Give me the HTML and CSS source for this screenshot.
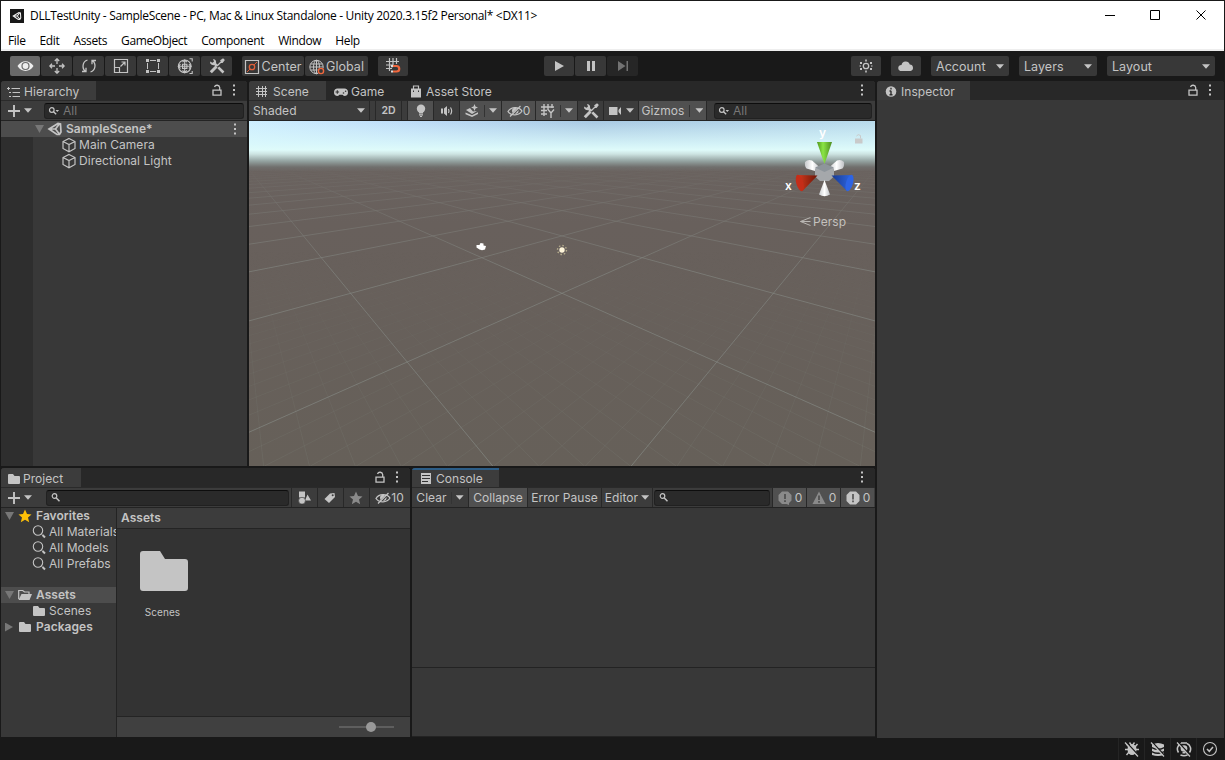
FILE: index.html
```html
<!DOCTYPE html>
<html lang="en">
<head>
    <meta charset="UTF-8">
    <title>DLLTestUnity - SampleScene</title>
    <link rel="stylesheet" href="styles.css">
</head>
<body>
<!-- icon sprite -->
<svg class="sprite">
    <symbol id="unity" viewBox="0 0 16 16"><path d="M2 8 11 2.5 13.5 3 14 11 12.5 13.5 10 13.5zM2 8H8.5M8.5 8 12.5 2.8M8.5 8 12.5 13.2" fill="none" stroke="currentColor" stroke-width="1.7"/></symbol>
    <symbol id="eye" viewBox="0 0 16 16"><path d="M0 8C4 1.5 12 1.5 16 8 12 14.5 4 14.5 0 8z" fill="currentColor"/><circle cx="8" cy="8" r="4.1" fill="#6a6a6a"/><circle cx="8" cy="8" r="2.9" fill="currentColor"/></symbol>
    <symbol id="move" viewBox="0 0 16 16"><path d="M8 1v5M8 10v5M1 8h5M10 8h5M5.8 3 8 .8 10.2 3M5.800 13 8 15.2 10.2 13M3 5.8.8 8 3 10.2M13 5.8 15.2 8 13 10.2" fill="none" stroke="currentColor" stroke-width="1.3"/></symbol>
    <symbol id="rotate" viewBox="0 0 16 16"><path d="M6.5 2C1.5 3.5.5 10 4.5 13.5M9.5 14C14.5 12.5 15.5 6 11.5 2.5M1 13.5H5V9.8M15 2.5H11V6.2" fill="none" stroke="currentColor" stroke-width="1.3"/></symbol>
    <symbol id="scale" viewBox="0 0 16 16"><path d="M1.5 1.5h13v13h-13zM1.5 9.5h5v5M7.5 8.5 12 4M8.5 4H12v3.5" fill="none" stroke="currentColor" stroke-width="1.2"/></symbol>
    <symbol id="rect" viewBox="0 0 16 16"><path d="M2.5 5v6M13.5 5v6M5 2.5h6M5 13.5h6" stroke="currentColor"/><path d="M1 1h3v3H1zM12 1h3v3h-3zM1 12h3v3H1zM12 12h3v3h-3z" fill="currentColor"/></symbol>
    <symbol id="transform" viewBox="0 0 16 16"><g fill="none" stroke="currentColor" stroke-width="1.1"><circle cx="7.7" cy="8.3" r="6.3"/><path d="M7.7 1.5v13M1.2 8.3h13M5.5 4.200l2.2-2.200 2.2 2.2M5.5 12.4l2.2 2.2 2.2-2.2M3.5 6.1l-2.2 2.2 2.2 2.2M11.9 6.1l2.2 2.2-2.2 2.2M12.5 .8h2.700v2.700M12.5 15.5h2.700V13M5.500 6.200v4.200h4.400V6.200z"/></g></symbol>
    <symbol id="tools" viewBox="0 0 16 16"><path d="M1.800 14.200 7.500 8.500" stroke="currentColor" stroke-width="3"/><path d="M8 8 13 3M12 2.500l2-1.500 1 1-1.500 2z" fill="currentColor" stroke="currentColor" stroke-width="1.300"/><path d="M5 5l3 3M9.300 9.300 14.500 14.500" stroke="currentColor" stroke-width="2.600"/><path d="M1 3.500A3.200 3.200 0 0 0 6.300 6.300 3.200 3.200 0 0 0 4 .9L5 3.400 3.500 4.800z" fill="currentColor"/></symbol>
    <symbol id="pivot" viewBox="0 0 16 16"><path d="M1.5 1.5h13v13h-13z" fill="none" stroke="currentColor" stroke-width="1.2"/><path d="M3 13 6 10M10 6 13 3" stroke="#d85c38"/><circle cx="8" cy="8" r="2.7" fill="none" stroke="#e0603a" stroke-width="1.3"/></symbol>
    <symbol id="globe" viewBox="0 0 16 16"><g fill="none" stroke="currentColor"><circle cx="7.5" cy="8" r="6.7"/><ellipse cx="7.5" cy="8" rx="3" ry="6.7"/><path d="M7.5 1v14M1.5 5h12M1 8h13M1.5 11h12"/></g><circle cx="12" cy="12" r="3.6" fill="#383838"/><circle cx="12" cy="12" r="2.6" fill="none" stroke="#f0683e" stroke-width="1.4"/></symbol>
    <symbol id="snap" viewBox="0 0 16 16"><path d="M4.5 0v13M8 0v7M11.5 0v6M1 3.5h13M1 7h7M1 10.5h6" stroke="currentColor" stroke-width="1.2"/><path d="M8 8h3.500a2.700 2.700 0 0 1 0 5.500H8" fill="none" stroke="#f0683e" stroke-width="2.2"/><path d="M6 7h2v2.200H6zM6 12.4h2v2.200H6z" fill="#ddd"/></symbol>
    <symbol id="list" viewBox="0 0 16 16"><path d="M5.500 4.500H14M6.500 8.500H14M6.500 12.500H14M1 4.500h3M3 8.500h2M3 12.500h2M2.500 3v3" stroke="currentColor"/></symbol>
    <symbol id="hash" viewBox="0 0 16 16"><path d="M4.500 2v11M8.5 2v11M11.500 2v11M2 4.500h11M2 7.500h11M2 10.500h11" stroke="currentColor" stroke-width="1"/></symbol>
    <symbol id="pad" viewBox="0 0 16 16"><path d="M4.5 4.5h7A3.8 3.8 0 0 1 12 12Q10.5 12 9.5 10.7h-3Q5.5 12 4 12a3.8 3.8 0 0 1 .5-7.5z" fill="currentColor"/><path d="M2.5 8h3.6M4.3 6.2v3.6" stroke="#333" stroke-width="1.1"/><circle cx="10.5" cy="9" r=".8" fill="#333"/><circle cx="12.6" cy="7.2" r=".8" fill="#333"/></symbol>
    <symbol id="bag" viewBox="0 0 16 16"><path d="M3 4.500h10v9H3z" fill="currentColor"/><path d="M5.5 5V2h5V5" fill="none" stroke="currentColor" stroke-width="1.2"/><path d="M5.5 6.500v1.500M10.5 6.500v1.500" stroke="#333"/></symbol>
    <symbol id="info" viewBox="0 0 16 16"><circle cx="8" cy="7.500" r="5.300" fill="currentColor"/><path d="M8 3.800v1.800M8 6.700v4.200M6.5 7H8M6.5 10.700h3" stroke="#303030" stroke-width="1.4"/></symbol>
    <symbol id="lock" viewBox="0 0 16 16"><path d="M4 8.2h8v5H4zM10.7 8V5.5A2.7 2.7 0 0 0 5.5 5" fill="none" stroke="currentColor" stroke-width="1.3"/></symbol>
    <symbol id="dots" viewBox="0 0 16 16"><path d="M7 2.500h2v2H7zM7 7h2v2H7zM7 11.5h2v2H7z" fill="currentColor"/></symbol>
    <symbol id="plus" viewBox="0 0 16 16"><path d="M2 8h12M8 2v12" stroke="currentColor" stroke-width="1.9"/></symbol>
    <symbol id="find" viewBox="0 0 16 16"><circle cx="5.500" cy="6" r="2.300" fill="none" stroke="currentColor" stroke-width="1.2"/><path d="M7.300 8l3.200 3.200" stroke="currentColor" stroke-width="1.500"/></symbol>
    <symbol id="find2" viewBox="0 0 16 16"><circle cx="4.800" cy="7" r="2.300" fill="none" stroke="currentColor" stroke-width="1.2"/><path d="M6.500 8.800l2.700 2.500" stroke="currentColor" stroke-width="1.4"/><path d="M8.500 7h3.600l-1.800 2z" fill="currentColor"/></symbol>
    <symbol id="lens" viewBox="0 0 16 16"><circle cx="7" cy="6.5" r="4.700" fill="none" stroke="currentColor" stroke-width="1.1"/><path d="M10.3 10 11.5 11" stroke="currentColor"/><path d="M11.5 11l2.500 2.500" stroke="currentColor" stroke-width="2"/></symbol>
    <symbol id="cube" viewBox="0 0 16 16"><path d="M8 1.500 14 4.500v7L8 14.700 2 11.500v-7zM2 4.500l6 3 6-3M8 7.500v7" fill="none" stroke="currentColor" stroke-width="1.2"/></symbol>
    <symbol id="bulb" viewBox="0 0 16 16"><circle cx="8" cy="5.800" r="4.200" fill="currentColor"/><path d="M6 9h4v1.500H6zM6 11.300h4v1.200H6zM7 13h2v1H7z" fill="currentColor"/></symbol>
    <symbol id="audio" viewBox="0 0 16 16"><path d="M2 5.500h2v5H2zM5 5.500 8 3v10L5 10.500z" fill="currentColor"/><path d="M9.500 6q1 2 0 4M11.500 4.500q2.300 3.500 0 7" fill="none" stroke="currentColor" stroke-width="1.2"/></symbol>
    <symbol id="fx" viewBox="0 0 16 16"><path d="M2 7l4-2L9 8.500l4-.5-5 3zM1.500 9.500 8 12.300l6-3v1.700L8 14 1.500 11.200zM10.500 1l1 2.500L14 4.500l-2.500 1-1 2.500-1-2.500L7 4.500l2.500-1z" fill="currentColor"/></symbol>
    <symbol id="hidden" viewBox="0 0 16 16"><path d="M1 8.500C4 3.500 12 3.500 15 8 12 13 4 13 1 8.500zM3 13.500 13.500 3" fill="none" stroke="currentColor" stroke-width="1.3"/><path d="M5 8a3 3 0 0 1 5-2.500L5.500 10zM8 11l3.500-4q.5 4-3.500 4z" fill="currentColor"/></symbol>
    <symbol id="gridy" viewBox="0 0 16 16"><path d="M4 1v12M8 1v6M12 1v4M1 4h13M1 7.500h6M1 11h6M8 6.500l3 3.500 3-3.500M11 10v5" fill="none" stroke="currentColor" stroke-width="1.4"/></symbol>
    <symbol id="cam" viewBox="0 0 16 16"><path d="M1 4h8.500v8H1zM10.500 7 13 4v8l-2.500-3z" fill="currentColor"/></symbol>
    <symbol id="folder" viewBox="0 0 16 16"><path d="M2 4q0-1 1-1h4l1.500 2H13q1 0 1 1v6q0 1-1 1H3q-1 0-1-1z" fill="currentColor"/></symbol>
    <symbol id="open" viewBox="0 0 16 16"><path d="M1.700 12V3.500h4L7.500 5H12v2" fill="none" stroke="currentColor" stroke-width="1.2"/><path d="M1.500 13 4.500 7H15l-2.500 6z" fill="currentColor"/></symbol>
    <symbol id="star" viewBox="0 0 16 16"><path d="M8 1.500l2 4.500 4.500.4L11 9.500l1.200 4.700L8 11.700l-4.200 2.500L5 9.500 1.500 6.400 6 6z" fill="currentColor"/></symbol>
    <symbol id="shapes" viewBox="0 0 16 16"><path d="M3 1.500h6v6H3zM11.500 4.500 15 10.500H9z" fill="currentColor"/><circle cx="6" cy="10.700" r="3.400" fill="currentColor" stroke="#3c3c3c" stroke-width=".6"/></symbol>
    <symbol id="tag" viewBox="0 0 16 16"><path d="M2.500 9 8 3.500l4.500-.5.500 4L7 13z" fill="currentColor"/><circle cx="10.700" cy="5.200" r="1" fill="#3c3c3c"/></symbol>
    <symbol id="page" viewBox="0 0 16 16"><path d="M3 2h10v11H3z" fill="currentColor"/><path d="M4 4.500h8M4 7.500h8M4 10.500h6" stroke="#333"/></symbol>
    <symbol id="err" viewBox="0 0 16 16"><path d="M5 1.500h6L14.500 5v5.500L12 13v2L9.500 14H5L1.500 10.500V5z" fill="currentColor"/><path d="M8 4v5M8 10.300v1.800" stroke="#444" stroke-width="1.5"/></symbol>
    <symbol id="warn" viewBox="0 0 16 16"><path d="M8 1.500 14.500 14h-13z" fill="currentColor"/><path d="M8 5.500v4.500M8 11v1.700" stroke="#444" stroke-width="1.5"/></symbol>
    <symbol id="msg" viewBox="0 0 16 16"><path d="M5 1.500h6L14.500 5v6L11 14.500H5L1.500 11V5z" fill="currentColor"/><path d="M8 4v5.500M8 10.500v1.800" stroke="#444" stroke-width="1.5"/></symbol>
    <symbol id="sun" viewBox="0 0 16 16"><circle cx="8" cy="8" r="2.700" fill="none" stroke="currentColor" stroke-width="1.3"/><g fill="currentColor"><path d="M7.200 1.500h1.600v2H7.200zM7.200 12.500h1.600v2H7.200zM2 4h2v2H2zM12 4h2v2h-2zM2 10h2v2H2zM12 10h2v2h-2zM1.500 7.500H3v1H1.500zM13 7.500h1.500v1H13z"/></g></symbol>
    <symbol id="cloud" viewBox="0 0 16 16"><path d="M4 13a3.500 3 0 0 1-.5-6A4.300 4.300 0 0 1 11.800 6.500 3.300 3.300 0 0 1 12.500 13z" fill="currentColor"/></symbol>
    <symbol id="bug" viewBox="0 0 16 16"><ellipse cx="8" cy="8.500" rx="4.500" ry="5.500" fill="currentColor"/><path d="M1 8.500h14M2.500 3 5 6M13.500 3 11 6M2.500 14 5 11M13.500 14 11 11M5.500 1.500 8 5l2.500-3.500" fill="none" stroke="currentColor" stroke-width="1.4"/><path d="M2 1 15 15" stroke="#191919" stroke-width="1.600"/><path d="M1 1.500 14 15.500" stroke="currentColor" stroke-width="1.2"/></symbol>
    <symbol id="db" viewBox="0 0 16 16"><path d="M2 3.500q6-3 12 0v2.500q-6 3-12 0zM2 7.500q6 3 12 0v2.500q-6 3-12 0zM2 11.500q6 3 12 0V14q-6 2-12 0z" fill="currentColor"/><path d="M2 1 15 15" stroke="#191919" stroke-width="1.600"/><path d="M1 1.500 14 15.500" stroke="currentColor" stroke-width="1.2"/></symbol>
    <symbol id="gi" viewBox="0 0 16 16"><path d="M5 2.500a6 6 0 0 0-2.500 9M11 2.500a6 6 0 0 1 2.500 9M4.500 14q3.500 1.500 7 0M5 2h6" fill="none" stroke="currentColor" stroke-width="1.6"/><circle cx="8" cy="7.500" r="3.300" fill="currentColor"/><path d="M6.500 11h3v1.500h-3z" fill="currentColor"/><path d="M2 1 15 15" stroke="#191919" stroke-width="1.600"/><path d="M1 1.500 14 15.500" stroke="currentColor" stroke-width="1.2"/></symbol>
    <symbol id="ok" viewBox="0 0 16 16"><circle cx="8" cy="8" r="6.500" fill="none" stroke="currentColor" stroke-width="1.1"/><path d="M5 8l2.300 2.300L11 6" fill="none" stroke="currentColor" stroke-width="1.5"/></symbol>
</svg>

<div class="window">
    <header class="titlebar">
        <span class="logo"><svg><use href="#unity"/></svg></span>
        <span class="title">DLLTestUnity - SampleScene - PC, Mac &amp; Linux Standalone - Unity 2020.3.15f2 Personal* &lt;DX11&gt;</span>
        <svg class="controls" viewBox="0 0 102 11"><path d="M0 5.500h10M45.500.5h9v9h-9zM91.500.5l9 9M100.500.5l-9 9" fill="none" stroke="#000"/></svg>
    </header>
    <nav class="menu">
        <span>File</span><span>Edit</span><span>Assets</span><span>GameObject</span><span>Component</span><span>Window</span><span>Help</span>
    </nav>

    <div class="toolbar">
        <div class="group tools">
            <b class="on"><svg class="i18"><use href="#eye"/></svg></b><b><svg><use href="#move"/></svg></b><b><svg><use href="#rotate"/></svg></b><b><svg><use href="#scale"/></svg></b><b><svg><use href="#rect"/></svg></b><b><svg><use href="#transform"/></svg></b><b><svg><use href="#tools"/></svg></b>
        </div>
        <div class="group pivots">
            <b><svg><use href="#pivot"/></svg>Center</b><b><svg><use href="#globe"/></svg>Global</b>
        </div>
        <div class="group"><b><svg><use href="#snap"/></svg></b></div>
        <div class="group play">
            <b><svg viewBox="0 0 16 16"><path d="M4 3l9 5-9 5z" fill="currentColor"/></svg></b><b><svg viewBox="0 0 16 16"><path d="M4 3h3v10H4zM9 3h3v10H9z" fill="currentColor"/></svg></b><b class="off"><svg viewBox="0 0 16 16"><path d="M3 3l7.500 5L3 13zM11.500 3H13v10h-1.500z" fill="currentColor"/></svg></b>
        </div>
        <div class="group right">
            <b><svg><use href="#sun"/></svg></b><b><svg><use href="#cloud"/></svg></b>
            <b class="drop">Account<i class="arrow"></i></b><b class="drop">Layers<i class="arrow"></i></b><b class="drop wide">Layout<i class="arrow"></i></b>
        </div>
    </div>

    <main class="docks">
        <div class="left">
            <div class="top">
                <section class="panel hierarchy">
                    <div class="tabs"><span class="tab active"><svg><use href="#list"/></svg>Hierarchy</span><svg class="lock"><use href="#lock"/></svg><svg class="dots"><use href="#dots"/></svg></div>
                    <div class="bar"><svg class="plus"><use href="#plus"/></svg><i class="arrow"></i><span class="search"><svg><use href="#find2"/></svg>All</span></div>
                    <div class="tree">
                        <div class="row scene"><i class="arrow fold"></i><svg><use href="#unity"/></svg><span>SampleScene*</span><svg class="dots"><use href="#dots"/></svg></div>
                        <div class="row"><svg><use href="#cube"/></svg><span>Main Camera</span></div>
                        <div class="row"><svg><use href="#cube"/></svg><span>Directional Light</span></div>
                    </div>
                </section>

                <section class="panel sceneview">
                    <div class="tabs"><span class="tab active"><svg><use href="#hash"/></svg>Scene</span><span class="tab game"><svg><use href="#pad"/></svg>Game</span><span class="tab store"><svg><use href="#bag"/></svg>Asset Store</span><svg class="dots"><use href="#dots"/></svg></div>
                    <div class="bar cells">
                        <span class="cell shaded">Shaded<i class="arrow"></i></span>
                        <span class="cell w6"></span>
                        <span class="cell w26 twod">2D</span>
                        <span class="cell w6"></span>
                        <span class="cell w26 on"><svg><use href="#bulb"/></svg></span>
                        <span class="cell w26"><svg><use href="#audio"/></svg></span>
                        <span class="cell w42 on"><svg><use href="#fx"/></svg><i class="line"></i><i class="arrow"></i></span>
                        <span class="cell w34 on"><svg><use href="#hidden"/></svg>0</span>
                        <span class="cell w42 on"><svg><use href="#gridy"/></svg><i class="line"></i><i class="arrow"></i></span>
                        <span class="cell w26"><svg><use href="#tools"/></svg></span>
                        <span class="cell w35"><svg><use href="#cam"/></svg><i class="arrow"></i></span>
                        <span class="cell gizmos on">Gizmos<i class="line"></i><i class="arrow"></i></span>
                        <span class="cell last"><span class="search"><svg><use href="#find2"/></svg>All</span></span>
                    </div>
                    <svg class="viewport" viewBox="249 121 626 345">
                        <defs>
                            <linearGradient id="sky" x1="0" y1="0" x2="1" y2="0">
                                <stop offset="0" stop-color="#cdeeff"/><stop offset=".25" stop-color="#bedcf8"/><stop offset=".55" stop-color="#a9c9e3"/><stop offset="1" stop-color="#b8daec"/>
                            </linearGradient>
                            <linearGradient id="haze" x1="0" y1="121" x2="0" y2="171" gradientUnits="userSpaceOnUse">
                                <stop offset="0" stop-color="#ddf9fa" stop-opacity="0"/><stop offset=".45" stop-color="#dcfafb" stop-opacity=".8"/><stop offset=".58" stop-color="#dffbfa"/><stop offset=".66" stop-color="#cde4e2"/><stop offset=".8" stop-color="#94a3a1"/><stop offset=".92" stop-color="#706f6d"/><stop offset="1" stop-color="#6b6461"/>
                            </linearGradient>
                            <linearGradient id="ground" x1="0" y1="0" x2="0" y2="1"><stop offset="0" stop-color="#6c6562"/><stop offset=".3" stop-color="#68605c"/><stop offset="1" stop-color="#666059"/></linearGradient>
                            <linearGradient id="far" x1="0" y1="165" x2="0" y2="270" gradientUnits="userSpaceOnUse"><stop offset="0" stop-color="#000"/><stop offset=".3" stop-color="#666"/><stop offset="1" stop-color="#fff"/></linearGradient>
                            <linearGradient id="near" x1="0" y1="250" x2="0" y2="466" gradientUnits="userSpaceOnUse"><stop offset="0" stop-color="#000"/><stop offset=".5" stop-color="#888"/><stop offset="1" stop-color="#fff"/></linearGradient>
                            <mask id="farMask" maskUnits="userSpaceOnUse" x="249" y="121" width="626" height="345"><path d="M249 121h626v345H249z" fill="url(#far)"/></mask>
                            <mask id="nearMask" maskUnits="userSpaceOnUse" x="249" y="121" width="626" height="345"><path d="M249 121h626v345H249z" fill="url(#near)"/></mask>
                            <linearGradient id="red"><stop offset="0" stop-color="#d23a1d"/><stop offset="1" stop-color="#6d1507"/></linearGradient>
                            <linearGradient id="blue"><stop offset="0" stop-color="#173a92"/><stop offset="1" stop-color="#2f66e0"/></linearGradient>
                            <linearGradient id="green"><stop offset="0" stop-color="#4f961c"/><stop offset=".4" stop-color="#8be545"/><stop offset="1" stop-color="#4d8c20"/></linearGradient>
                            <linearGradient id="white"><stop offset="0" stop-color="#c8cacd"/><stop offset=".5" stop-color="#fff"/><stop offset="1" stop-color="#c0c2c6"/></linearGradient>
                        </defs>
                        <path d="M249 121h626v345H249z" fill="url(#ground)"/>
                        <path d="M249 121h626v50H249z" fill="url(#sky)"/>
                        <path d="M249 121h626v50H249z" fill="url(#haze)"/>
                        <g id="minor" class="minor" mask="url(#nearMask)"></g>
                        <g id="major" class="major" mask="url(#farMask)"></g>
                        <!-- camera and light gizmos -->
                        <path d="M476.500 247.500v-2.500h3l1-2 3 .5v2l2.500.5-1 3.500-3 .8-2.500-.8z" fill="#fff"/>
                        <circle cx="562" cy="250" r="4.500" fill="none" stroke="#b5ac8d" stroke-width="1.4" stroke-dasharray="1.500 2"/><circle cx="562" cy="250" r="2.700" fill="#fff5da"/>
                        <!-- orientation gizmo -->
                        <path d="M805 162q3-3 7-1.500l8 7-5 3.500-8.500-2.500q-2-2-1.500-6.500z" fill="url(#white)"/>
                        <path d="M844 162q-3-3-7-1.500l-8 7 5 3.500 8.500-2.500q2-2 1.500-6.500z" fill="url(#white)"/>
                        <path d="M815 168.500l9.500-4 9.500 4v8l-5 4.500h-9l-5-4.500z" fill="#a5a8ab"/><path d="M815 167.500l9.500-4 9.500 4-9.500 4.500z" fill="#8e959b"/>
                        <path d="M824.500 180l5.500 14.500q-5.500 3.500-11 0z" fill="url(#white)"/>
                        <path d="M817 142h15l-7.500 22z" fill="url(#green)"/>
                        <path d="M817.500 175.500 798 175l4.500 16z" fill="url(#red)"/><ellipse cx="799.800" cy="183" rx="3.500" ry="8.500" transform="rotate(-16 799.800 183)" fill="#c52d18"/>
                        <path d="M831.500 175.500 852 175l-5 16z" fill="url(#blue)"/><ellipse cx="849.500" cy="183" rx="3.500" ry="8.500" transform="rotate(16 849.500 183)" fill="#2d64e4"/>
                        <g class="axis"><text x="819" y="137">y</text><text x="785" y="190">x</text><text x="854" y="190">z</text></g>
                        <path d="M810.500 217.500 800.500 221.500 810.500 225.500M800.500 221.500h10" fill="none" stroke="#bab7b3"/>
                        <text class="persp" x="813" y="226">Persp</text>
                        <path d="M855 138.500h7.500v5H855z" fill="#c9caca"/><path d="M856.500 136q1.500-2.500 4-.5v3" fill="none" stroke="#c9caca"/>
                    </svg>
                </section>
            </div>

            <div class="bottom">
                <section class="panel project">
                    <div class="tabs"><span class="tab active"><svg><use href="#folder"/></svg>Project</span><svg class="lock"><use href="#lock"/></svg><svg class="dots"><use href="#dots"/></svg></div>
                    <div class="bar cells">
                        <svg class="plus"><use href="#plus"/></svg><i class="arrow"></i><span class="search"><svg><use href="#find"/></svg></span>
                        <span class="cell w26"><svg><use href="#shapes"/></svg></span><span class="cell w26"><svg><use href="#tag"/></svg></span><span class="cell w26 dim"><svg><use href="#star"/></svg></span><span class="cell w41"><svg><use href="#hidden"/></svg>10</span>
                    </div>
                    <div class="browser">
                        <div class="folders">
                            <div class="row strong"><i class="arrow fold"></i><svg class="gold"><use href="#star"/></svg><span>Favorites</span></div>
                            <div class="row sub"><svg><use href="#lens"/></svg><span>All Materials</span></div>
                            <div class="row sub"><svg><use href="#lens"/></svg><span>All Models</span></div>
                            <div class="row sub"><svg><use href="#lens"/></svg><span>All Prefabs</span></div>
                            <div class="row strong picked"><i class="arrow fold"></i><svg><use href="#open"/></svg><span>Assets</span></div>
                            <div class="row sub"><svg><use href="#folder"/></svg><span>Scenes</span></div>
                            <div class="row strong"><i class="arrow fold closed"></i><svg><use href="#folder"/></svg><span>Packages</span></div>
                        </div>
                        <div class="assets">
                            <div class="crumb">Assets</div>
                            <div class="files">
                                <div class="file"><svg viewBox="0 0 48 40"><path d="M0 3q0-3 3-3h17l5 8h20q3 0 3 3v26q0 3-3 3H3q-3 0-3-3z" fill="#c4c4c4"/></svg><span>Scenes</span></div>
                            </div>
                            <div class="zoom"><div class="track"><i class="knob"></i></div></div>
                        </div>
                    </div>
                </section>

                <section class="panel console">
                    <div class="tabs"><span class="tab active focus"><svg><use href="#page"/></svg>Console</span><svg class="dots"><use href="#dots"/></svg></div>
                    <div class="bar cells">
                        <span class="cell clear">Clear<i class="line"></i><i class="arrow"></i></span>
                        <span class="cell on collapse">Collapse</span><span class="cell errpause">Error Pause</span><span class="cell editor">Editor<i class="arrow"></i></span>
                        <span class="cell find"><span class="search"><svg><use href="#find"/></svg></span></span>
                        <span class="cell w34 on count"><svg class="grey"><use href="#err"/></svg>0</span><span class="cell w34 on count"><svg class="grey"><use href="#warn"/></svg>0</span><span class="cell w34 on count"><svg><use href="#msg"/></svg>0</span>
                    </div>
                    <div class="log"></div>
                    <div class="detail"></div>
                </section>
            </div>
        </div>

        <section class="panel inspector">
            <div class="tabs"><span class="tab active"><svg><use href="#info"/></svg>Inspector</span><svg class="lock"><use href="#lock"/></svg><svg class="dots"><use href="#dots"/></svg></div>
        </section>
    </main>

    <footer class="status">
        <span><svg><use href="#bug"/></svg></span><span><svg><use href="#db"/></svg></span><span><svg><use href="#gi"/></svg></span><span><svg><use href="#ok"/></svg></span>
    </footer>
</div>
<script src="grid.js"></script>
</body>
</html>
```
FILE: styles.css
```css
* {
    box-sizing: border-box;
}
body {
    margin: 0;
    width: 1225px;
    height: 760px;
    overflow: hidden;
    background: #191919;
    color: #c4c4c4;
    font: 12px/16px Inter, "Liberation Sans", sans-serif;
    letter-spacing: 0.05px;
}
svg {
    display: block;
    flex: none;
    width: 16px;
    height: 16px;
}
.sprite {
    display: none;
}
.window {
    height: 760px;
    padding: 1px 1px 0;
    background: #191919;
    display: flex;
    flex-direction: column;
}

/* title and menu */
.titlebar {
    height: 29px;
    background: #fff;
    color: #000;
    display: flex;
    align-items: center;
    padding-left: 9px;
    font: 12px/16px "Open Sans", sans-serif;
    letter-spacing: -0.33px;
}
.logo {
    width: 14px;
    height: 14px;
    background: #181818;
    color: #eee;
    display: grid;
    place-items: center;
    margin-right: 6px;
}
.logo svg {
    width: 10px;
    height: 10px;
}
.titlebar .controls {
    width: 102px;
    height: 11px;
    margin: 0 17px 0 auto;
}
.menu {
    height: 21px;
    background: #fff;
    border-bottom: 2px solid #eee;
    color: #000;
    display: flex;
    gap: 14px;
    padding: 3px 7px 0;
    font: 12px/16px "Open Sans", sans-serif;
    letter-spacing: -0.36px;
}

/* main toolbar */
.toolbar {
    height: 30px;
    display: flex;
    align-items: center;
    padding: 0 9px;
    gap: 10px;
}
.group {
    display: flex;
    gap: 1px;
}
.group b {
    font-weight: 400;
    width: 30px;
    height: 20px;
    background: #383838;
    border-radius: 2px;
    display: flex;
    align-items: center;
    justify-content: center;
}
.tools b {
    width: 31px;
}
.tools b:first-child {
    width: 30px;
}
.group .on {
    background: #6a6a6a;
    color: #eee;
}
.i18 {
    width: 17px;
}
.pivots b,
.right .drop {
    font-size: 12.5px;
    padding-top: 1px;
}
.pivots b {
    width: 62px;
    gap: 1px;
}
.pivots b + b {
    width: 63px;
}
.play {
    margin-left: 126px;
}
.play b + b {
    width: 31px;
}
.group .off {
    background: #262626;
    color: #727272;
}
.right {
    margin-left: auto;
    gap: 10px;
}
.right .drop {
    width: 78px;
    padding-left: 5px;
    padding-right: 5px;
    justify-content: space-between;
}
.right .wide {
    width: 108px;
}
.arrow {
    flex: none;
    width: 8px;
    height: 4.5px;
    background: currentColor;
    clip-path: polygon(0 0, 100% 0, 50% 100%);
}

/* docked panels */
.docks {
    height: 657px;
    display: flex;
    gap: 2px;
}
.left {
    width: 874px;
    display: flex;
    flex-direction: column;
    gap: 2px;
}
.top {
    height: 385px;
    display: flex;
    gap: 2px;
}
.bottom {
    height: 269px;
    display: flex;
    gap: 2px;
}
.panel {
    background: #383838;
    border-radius: 3px 3px 0 0;
    overflow: hidden;
    display: flex;
    flex-direction: column;
}
.hierarchy {
    width: 246px;
}
.sceneview {
    width: 626px;
}
.project {
    width: 409px;
}
.console {
    width: 463px;
}
.inspector {
    width: 347px;
}
.tabs {
    height: 19px;
    background: #282828;
    display: flex;
    align-items: center;
}
.tab {
    height: 19px;
    display: flex;
    align-items: center;
    padding: 2px 9px 0 5px;
    gap: 2px;
}
.tab.active {
    background: #3c3c3c;
}
.hierarchy .tab {
    width: 95px;
}
.sceneview .tab:first-child {
    width: 77px;
    gap: 3px;
}
.sceneview .game {
    width: 81px;
    padding: 2px 0 0 7px;
}
.sceneview .store {
    padding: 2px 0 0 1px;
    gap: 2px;
}
.project .tab {
    width: 80px;
    gap: 1px;
}
.inspector .tab {
    width: 93px;
    padding-left: 6px;
}
.console .tab {
    width: 87px;
    padding-left: 6px;
}
.tab.focus {
    border-top: 2px solid #2c5d87;
    padding-top: 1px;
}
.lock {
    margin: 0 0 2px auto;
}
.tabs .dots {
    margin: 0 5px 1px auto;
}
.tabs .lock + .dots {
    margin-left: 1px;
}
.inspector .tabs .dots {
    margin-right: 6px;
}
.bar {
    height: 21px;
    background: #3c3c3c;
    border-top: 1px solid #2a2a2a;
    border-bottom: 1px solid #232323;
    display: flex;
    align-items: center;
}
.plus {
    margin: 0 2px 0 5px;
}
.search {
    height: 16px;
    border: 1px solid #212121;
    border-top-color: #0d0d0d;
    border-radius: 3px;
    background: #2a2a2a;
    color: #777;
    display: flex;
    align-items: center;
    flex: 1;
    margin: 0 3px 0 12px;
    padding-left: 2px;
}
.search svg {
    color: #c4c4c4;
}
.cell {
    height: 19px;
    border-left: 1px solid #282828;
    display: flex;
    align-items: center;
    justify-content: center;
    flex: none;
}
.cell.on {
    background: #505050;
}
.line {
    width: 1px;
    height: 12px;
    background: #333;
}
.w6 { width: 6px; }
.w26 { width: 26px; }
.w34 { width: 34px; }
.w35 { width: 35px; gap: 2px; }
.w41 { width: 41px; }
.w42 { width: 42px; gap: 4px; }
.shaded {
    width: 120px;
    border: 0;
    justify-content: space-between;
    padding: 0 4px;
}
.twod {
    font-size: 10.5px;
    font-weight: 600;
}
.gizmos {
    width: 68px;
    gap: 5px;
}
.cell.last {
    flex: 1;
}
.last .search {
    margin-left: 7px;
}
.row {
    height: 16px;
    display: flex;
    align-items: center;
    white-space: nowrap;
}
.tree {
    flex: 1;
    background: linear-gradient(90deg, #2e2e2e 32px, #383838 32px);
}
.tree .row {
    padding-left: 60px;
    gap: 2px;
}
.tree .scene {
    background: #4d4d4d;
    padding-left: 34px;
    font-weight: 600;
    gap: 3px;
}
.scene .dots {
    margin: 0 4px 0 auto;
}
.fold {
    width: 9px;
    height: 8px;
    color: #777;
}
.viewport {
    width: 626px;
    height: 345px;
}
.major {
    stroke: #858783;
    stroke-width: 1;
    stroke-opacity: 0.62;
}
.minor {
    stroke: #7b8079;
    stroke-width: 1;
    stroke-opacity: 0.26;
}
.axis {
    fill: #fff;
    font-size: 12px;
    font-weight: 600;
}
.persp {
    fill: #c4c1be;
    font-size: 12px;
}

/* project browser */
.project .search {
    margin: 0 2px 0 14px;
}
.project .cell {
    padding-right: 2px;
}
.project .w41 {
    padding-right: 1px;
}
.dim {
    color: #8a8a8a;
}
.browser {
    flex: 1;
    display: flex;
}
.folders {
    width: 116px;
    border-right: 1px solid #232323;
    overflow: hidden;
}
.folders .row {
    padding-left: 4px;
    gap: 3px;
}
.folders .sub {
    padding-left: 30px;
    gap: 2px;
}
.folders .strong {
    font-weight: 600;
}
.folders .picked {
    margin-top: 15px;
    background: #4d4d4d;
}
.folders .closed {
    width: 8px;
    height: 9px;
    clip-path: polygon(0 0, 100% 50%, 0 100%);
    margin-right: 1px;
}
.gold {
    color: #ffc107;
}
.assets {
    flex: 1;
    display: flex;
    flex-direction: column;
    background: #333;
}
.crumb {
    height: 21px;
    background: #3c3c3c;
    border-bottom: 1px solid #242424;
    padding: 2px 4px;
    font-weight: 600;
}
.files {
    flex: 1;
    padding: 22px 0 0 23px;
}
.file {
    width: 48px;
    font-size: 10px;
    display: flex;
    flex-direction: column;
    gap: 13px;
    align-items: center;
}
.file span {
    padding-right: 3px;
}
.file svg {
    width: 48px;
    height: 40px;
}
.zoom {
    height: 21px;
    background: #404040;
    border-top: 1px solid #242424;
    display: flex;
    align-items: center;
    justify-content: flex-end;
    padding-right: 16px;
}
.track {
    width: 55px;
    height: 2px;
    background: #5e5e5e;
    display: flex;
    align-items: center;
    padding-left: 27px;
}
.knob {
    width: 10px;
    height: 10px;
    border-radius: 5px;
    background: #999;
    flex: none;
}

/* console */
.clear {
    width: 56px;
    border: 0;
    gap: 4px;
}
.collapse {
    width: 59px;
}
.errpause {
    width: 74px;
    white-space: nowrap;
}
.editor {
    width: 51px;
    gap: 3px;
}
.console .find {
    width: 120px;
}
.find .search {
    margin: 0 2px 0 1px;
}
.count {
    gap: 2px;
}
.grey {
    color: #8a8a8a;
}
.log {
    flex: 1;
}
.detail {
    height: 70px;
    border-top: 1px solid #232323;
    border-bottom: 1px solid #232323;
}

.status {
    height: 22px;
    display: flex;
    justify-content: flex-end;
    padding-right: 2px;
}
.status span {
    width: 26px;
    border-left: 1px solid #252525;
    display: grid;
    place-items: center;
}
```
FILE: grid.js
```js
// ground plane seen from a camera turned 45 degrees
const HORIZON = 145.5;
const BOTTOM = 466;

function addLines(id, from, to, step, top) {
    let out = '';
    for (let i = from; i <= to; i++) {
        const c = i * step;
        const slope = 333 * (2 * c + 3.151) / 465.7;
        const dx1 = slope * (top - HORIZON);
        const dx2 = slope * (BOTTOM - HORIZON);
        out += `<line x1="${229 + dx1}" y1="${top}" x2="${229 + dx2}" y2="${BOTTOM}"/>`;
        out += `<line x1="${895 - dx1}" y1="${top}" x2="${895 - dx2}" y2="${BOTTOM}"/>`;
    }
    document.getElementById(id).innerHTML = out;
}

addLines('major', -2, 16, 1, 166);
addLines('minor', -16, 45, 0.1, 235);
```
